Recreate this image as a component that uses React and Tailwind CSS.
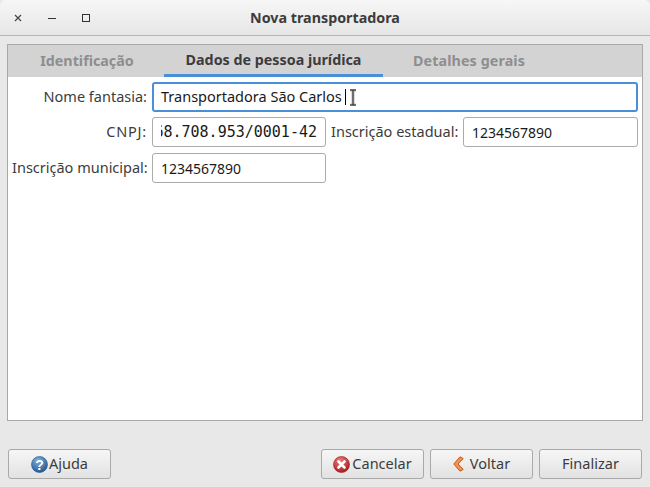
const labelClass = 'text-right text-[14.5px] text-[#3c3c3c] whitespace-nowrap';
const inputClass = 'h-[30px] rounded-[3px] border border-[#ababab] bg-white flex items-center px-2 overflow-hidden whitespace-nowrap text-[14px] text-[#1a1a1a]';

function HelpIcon() {
  return (
    <svg width="17" height="17" viewBox="0 0 17 17">
      <defs>
        <radialGradient id="help" cx="40%" cy="25%" r="80%">
          <stop offset="0" stopColor="#7fb0e0" />
          <stop offset="1" stopColor="#24568f" />
        </radialGradient>
      </defs>
      <circle cx="8.5" cy="8.5" r="8" fill="url(#help)" stroke="#1f4f85" strokeWidth="0.6" />
      <text x="8.5" y="13.5" textAnchor="middle" fontSize="14" fontWeight="700" fill="#fff" fontFamily="Liberation Sans, sans-serif">?</text>
    </svg>
  );
}

function CancelIcon() {
  return (
    <svg width="17" height="17" viewBox="0 0 17 17">
      <defs>
        <radialGradient id="cancel" cx="40%" cy="25%" r="80%">
          <stop offset="0" stopColor="#ef7b7b" />
          <stop offset="1" stopColor="#a81818" />
        </radialGradient>
      </defs>
      <circle cx="8.5" cy="8.5" r="8" fill="url(#cancel)" stroke="#8f1515" strokeWidth="0.6" />
      <path d="M5.5 5.5l6 6M11.5 5.5l-6 6" stroke="#fff" strokeWidth="2.6" strokeLinecap="round" />
    </svg>
  );
}

function BackIcon() {
  return (
    <svg width="11" height="16" viewBox="0 0 11 16">
      <path d="M7 0.8 L10.2 2.6 L5 8 L10.2 13.4 L7 15.2 L0.8 8 Z" fill="#f0944f" stroke="#c9551f" strokeWidth="1" strokeLinejoin="round" />
    </svg>
  );
}

function Button({ className, children }) {
  return (
    <button className={`h-[30px] flex items-center justify-center rounded-[3px] border border-[#a9a9a9] bg-gradient-to-b from-[#f6f6f6] to-[#e2e2e2] text-[14.5px] text-[#3c3c3c] ${className}`}>
      {children}
    </button>
  );
}

export default function App() {
  return (
    <div className="w-[650px] h-[487px] flex flex-col overflow-hidden bg-[#e8e8e8] font-['Noto_Sans',sans-serif]">
      <div className="h-[36px] shrink-0 flex items-center border-b border-[#b5b5b5] bg-gradient-to-b from-[#f7f7f7] to-[#e6e6e6] relative rounded-t-[6px]">
        <div className="flex items-center pl-[14px] gap-[26px] text-[#444]">
          <svg width="8" height="8" viewBox="0 0 8 8"><path d="M1 1l6 6M7 1l-6 6" stroke="#444" strokeWidth="1.2" /></svg>
          <svg width="8" height="8" viewBox="0 0 8 8"><path d="M0 4.5h8" stroke="#333" strokeWidth="1" /></svg>
          <svg width="8" height="8" viewBox="0 0 8 8"><rect x="0.5" y="0.5" width="7" height="7" fill="none" stroke="#333" strokeWidth="1" /></svg>
        </div>
        <div className="absolute inset-x-0 text-center text-[14.3px] font-bold text-[#3c3c3c]">Nova transportadora</div>
      </div>

      <div className="mt-[8px] mx-[7px] h-[377px] border border-[#a8a8a8] bg-white flex flex-col">
        <div className="h-[32px] shrink-0 flex bg-[#d3d3d3] text-[14.3px] font-bold">
          <div className="w-[156px] pl-[2px] flex items-center justify-center text-[#8e8e8e]">Identificação</div>
          <div className="w-[219px] flex items-center justify-center text-[#3c3c3c] border-b-[3px] border-[#4a90d9]">Dados de pessoa jurídica</div>
          <div className="flex-1 flex items-center justify-center pr-[87px] text-[#8e8e8e] tracking-[0.1px]">Detalhes gerais</div>
        </div>
        <div className="flex flex-col gap-[5px] pt-[5px] pl-[4px] pr-[4px]">
          <div className="flex items-center gap-[5px]">
            <div className={`${labelClass} w-[135px]`}>Nome fantasia:</div>
            <div className="h-[30px] flex-1 rounded-[3px] border-2 border-[#4a90d9] bg-white flex items-center px-[7px] text-[14.5px] text-[#1a1a1a]">
              Transportadora São Carlos
              <span className="ml-[3px] inline-block w-px h-[16px] bg-black" />
              <svg width="8" height="17" viewBox="0 0 8 17" className="ml-[3px]">
                <path d="M1 1h6M1 16h6M4 1v15" stroke="#bbb" strokeWidth="3" fill="none" />
                <path d="M1 1h6M1 16h6M4 1v15" stroke="#222" strokeWidth="1" fill="none" />
              </svg>
            </div>
          </div>
          <div className="flex items-center gap-[5px]">
            <div className={`${labelClass} w-[135px] tracking-[0.8px]`}>CNPJ:</div>
            <div className={`${inputClass} w-[174px]`}>
              <div className="w-full flex justify-end overflow-hidden">
                <span className="font-['DejaVu_Sans_Mono',monospace] text-[15px] shrink-0">68.708.953/0001-42</span>
              </div>
            </div>
            <div className={`${labelClass} w-[127px]`}>Inscrição estadual:</div>
            <div className={`${inputClass} flex-1`}>1234567890</div>
          </div>
          <div className="flex items-center gap-[5px] mt-px">
            <div className={`${labelClass} w-[135px]`}>Inscrição municipal:</div>
            <div className={`${inputClass} w-[174px]`}>1234567890</div>
          </div>
        </div>
      </div>

      <div className="mt-[28px] mx-[8px] flex items-center gap-[6px]">
        <Button className="w-[103px] gap-px"><HelpIcon />Ajuda</Button>
        <div className="flex-1" />
        <Button className="w-[103px] gap-0.5"><CancelIcon />Cancelar</Button>
        <Button className="w-[103px] gap-[6px]"><BackIcon />Voltar</Button>
        <Button className="w-[103px]">Finalizar</Button>
      </div>
    </div>
  );
}
